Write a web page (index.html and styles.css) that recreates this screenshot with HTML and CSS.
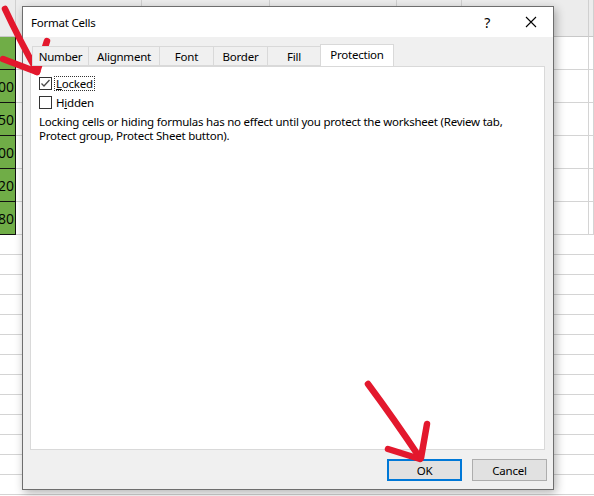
FILE: index.html
```html
<!DOCTYPE html>
<html lang="en">
<head>
    <meta charset="UTF-8">
    <meta name="viewport" content="width=device-width, initial-scale=1.0">
    <title>Format Cells</title>
    <link rel="stylesheet" href="styles.css">
</head>
<body>
    <div class="screen">
        <!-- worksheet behind the dialog -->
        <div class="sheet">
            <div class="hdr"></div><div class="hdr"></div><div class="hdr"></div><div class="hdr"></div><div class="hdr"></div><div class="hdr"></div><div class="hdr"></div>

            <div class="cell green"></div><div class="cell"></div><div class="cell"></div><div class="cell"></div><div class="cell"></div><div class="cell"></div><div class="cell"></div>
            <div class="cell green num"><span>1200</span></div><div class="cell"></div><div class="cell"></div><div class="cell"></div><div class="cell"></div><div class="cell"></div><div class="cell"></div>
            <div class="cell green num"><span>1350</span></div><div class="cell"></div><div class="cell"></div><div class="cell"></div><div class="cell"></div><div class="cell"></div><div class="cell"></div>
            <div class="cell green num"><span>1400</span></div><div class="cell"></div><div class="cell"></div><div class="cell"></div><div class="cell"></div><div class="cell"></div><div class="cell"></div>
            <div class="cell green num"><span>1520</span></div><div class="cell"></div><div class="cell"></div><div class="cell"></div><div class="cell"></div><div class="cell"></div><div class="cell"></div>
            <div class="cell green num"><span>1680</span></div><div class="cell"></div><div class="cell"></div><div class="cell"></div><div class="cell"></div><div class="cell"></div><div class="cell"></div>
        </div>

        <div class="dialog">
            <div class="titlebar">
                <span class="title">Format Cells</span>
                <span class="help">?</span>
                <svg class="close" width="12" height="12" viewBox="0 0 12 12">
                    <path d="M1 1 L11 11 M11 1 L1 11" stroke="#000" stroke-width="1.1" fill="none"/>
                </svg>
            </div>
            <div class="client">
                <div class="tabs">
                    <div class="tab tab-number">Number</div>
                    <div class="tab tab-alignment">Alignment</div>
                    <div class="tab tab-font">Font</div>
                    <div class="tab tab-border">Border</div>
                    <div class="tab tab-fill">Fill</div>
                    <div class="tab tab-protection active">Protection</div>
                </div>
                <div class="panel">
                    <label class="check-row">
                        <span class="box">
                            <svg width="11" height="11" viewBox="0 0 11 11">
                                <path d="M1.5 5.5 L4 8 L9.5 2" stroke="#4a4a4a" stroke-width="1.3" fill="none"/>
                            </svg>
                        </span>
                        <span class="label focused"><u>L</u>ocked</span>
                    </label>
                    <label class="check-row">
                        <span class="box"></span>
                        <span class="label">H<u>i</u>dden</span>
                    </label>
                    <p class="note">Locking cells or hiding formulas has no effect until you protect the worksheet (Review tab,<br>Protect group, Protect Sheet button).</p>
                </div>
                <div class="buttons">
                    <button class="btn default">OK</button>
                    <button class="btn">Cancel</button>
                </div>
            </div>
        </div>

        <!-- red marker arrows drawn on top -->
        <svg class="marks" width="594" height="496" viewBox="0 0 594 496">
            <g stroke="#e3182d" stroke-width="6.5" stroke-linecap="round" stroke-linejoin="round" fill="none">
                <path d="M5 9 Q19 39 37 71"/>
                <path d="M3 59 L37 72"/>
                <path d="M47 41 L37 72"/>
                <path d="M368 384 Q394 419 420 458"/>
                <path d="M388 449 L420 459"/>
                <path d="M427 424 L421 458"/>
            </g>
        </svg>
    </div>
</body>
</html>
```

FILE: styles.css
```css
* {
    margin: 0;
    padding: 0;
    box-sizing: border-box;
}

body {
    font-family: "Noto Sans", "Segoe UI", sans-serif;
    font-size: 11.5px;
    letter-spacing: -0.23px;
    color: #000;
    background: #fff;
}

.screen {
    position: relative;
    width: 594px;
    height: 496px;
    overflow: hidden;
    background:
        repeating-linear-gradient(to bottom, transparent 0, transparent 19px, #d4d4d4 19px, #d4d4d4 20px) 0 235px / 100% 100% no-repeat,
        #fff;
}

/* worksheet */
.sheet {
    display: grid;
    grid-template-columns: 16px 126px 128px 127px 65px 127px 5px;
    grid-template-rows: 37px repeat(6, 33px);
}

.hdr {
    background: #ececec;
    border-right: 1px solid #d0d0d0;
    border-bottom: 1px solid #c8c8c8;
}

.cell {
    border-right: 1px solid #d4d4d4;
    border-bottom: 1px solid #d4d4d4;
}

.cell.green {
    background: #70ad47;
    border-right: 1px solid #111;
    border-bottom: 1px solid #111;
}

.cell.num {
    display: flex;
    justify-content: flex-end;
    align-items: center;
    overflow: hidden;
    font-family: "Open Sans", sans-serif;
    font-size: 14px;
    letter-spacing: 0;
    padding-right: 1px;
}

/* dialog window */
.dialog {
    position: absolute;
    left: 22px;
    top: 6px;
    width: 532px;
    height: 484px;
    border: 1px solid #6e6e6e;
    background: #f0f0f0;
    display: flex;
    flex-direction: column;
    box-shadow: 2px 3px 9px rgba(0, 0, 0, 0.3);
}

.titlebar {
    height: 30px;
    background: #fff;
    display: flex;
    align-items: center;
    padding-left: 8px;
}

.title {
    flex: 1;
}

.help {
    font-size: 14px;
    margin-right: 35px;
}

.close {
    margin-right: 16px;
}

.client {
    flex: 1;
    display: flex;
    flex-direction: column;
    padding: 7px 8px 8px 7px;
}

.tabs {
    display: flex;
    align-items: flex-end;
    height: 22px;
    padding-left: 2px;
    position: relative;
    z-index: 1;
}

.tab {
    height: 20px;
    display: flex;
    align-items: center;
    justify-content: center;
    border: 1px solid #d9d9d9;
    border-right: none;
    background: #f0f0f0;
}

.tab-number { width: 56px; }
.tab-alignment { width: 71px; }
.tab-font { width: 54px; }
.tab-border { width: 54px; }
.tab-fill { width: 53px; }

.tab.active {
    width: 74px;
    height: 23px;
    margin-bottom: -1px;
    background: #fff;
    border-right: 1px solid #d9d9d9;
    padding-bottom: 2px;
}

.panel {
    flex: 1;
    background: #fff;
    border: 1px solid #d9d9d9;
    padding: 10px 8px 0 8px;
}

.check-row {
    display: flex;
    align-items: center;
    height: 13px;
    margin-bottom: 6px;
}

.box {
    width: 13px;
    height: 13px;
    border: 1px solid #333;
    background: #fff;
    display: flex;
    align-items: center;
    justify-content: center;
}

.label {
    margin-left: 2px;
    padding: 0 1px;
    line-height: 13px;
    border: 1px dotted transparent;
}

.label.focused {
    border-color: #333;
}

.note {
    margin-top: 2px;
    line-height: 14px;
    white-space: nowrap;
}

.buttons {
    display: flex;
    justify-content: flex-end;
    gap: 10px;
    margin-top: 9px;
    margin-right: -2px;
}

.btn {
    width: 75px;
    height: 22px;
    font-family: inherit;
    font-size: 11.5px;
    letter-spacing: -0.2px;
    color: #000;
    background: #e1e1e1;
    border: 1px solid #adadad;
}

.btn.default {
    border: 2px solid #0078d7;
}

.marks {
    position: absolute;
    left: 0;
    top: 0;
}
```
